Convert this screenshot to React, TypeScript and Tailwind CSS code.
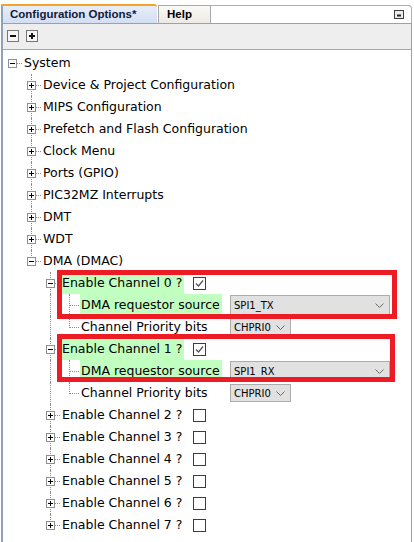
import React from 'react';

type Row = {
  level: number;
  label: string;
  toggle?: 'plus' | 'minus';
  last?: boolean;
  through?: boolean; // DMA children guide (x=47) passes through
  green?: boolean;
  check?: boolean;
  combo?: { value: string; wide: boolean };
};

const rows: Row[] = [
  { level: 0, label: 'System', toggle: 'minus' },
  { level: 1, label: 'Device & Project Configuration', toggle: 'plus' },
  { level: 1, label: 'MIPS Configuration', toggle: 'plus' },
  { level: 1, label: 'Prefetch and Flash Configuration', toggle: 'plus' },
  { level: 1, label: 'Clock Menu', toggle: 'plus' },
  { level: 1, label: 'Ports (GPIO)', toggle: 'plus' },
  { level: 1, label: 'PIC32MZ Interrupts', toggle: 'plus' },
  { level: 1, label: 'DMT', toggle: 'plus' },
  { level: 1, label: 'WDT', toggle: 'plus' },
  { level: 1, label: 'DMA (DMAC)', toggle: 'minus', last: true },
  { level: 2, label: 'Enable Channel 0 ?', toggle: 'minus', green: true, check: true },
  { level: 3, label: 'DMA requestor source', through: true, green: true, combo: { value: 'SPI1_TX', wide: true } },
  { level: 3, label: 'Channel Priority bits', through: true, last: true, combo: { value: 'CHPRI0', wide: false } },
  { level: 2, label: 'Enable Channel 1 ?', toggle: 'minus', green: true, check: true },
  { level: 3, label: 'DMA requestor source', through: true, green: true, combo: { value: 'SPI1_RX', wide: true } },
  { level: 3, label: 'Channel Priority bits', through: true, last: true, combo: { value: 'CHPRI0', wide: false } },
  { level: 2, label: 'Enable Channel 2 ?', toggle: 'plus', check: false },
  { level: 2, label: 'Enable Channel 3 ?', toggle: 'plus', check: false },
  { level: 2, label: 'Enable Channel 4 ?', toggle: 'plus', check: false },
  { level: 2, label: 'Enable Channel 5 ?', toggle: 'plus', check: false },
  { level: 2, label: 'Enable Channel 6 ?', toggle: 'plus', check: false },
  { level: 2, label: 'Enable Channel 7 ?', toggle: 'plus', check: false, last: true },
];

// x positions per tree level (relative to the tree's inner left edge)
const guideLeft = ['', 'left-[28px]', 'left-[47px]', 'left-[66px]'];
const boxLeft = ['left-[5px]', 'left-[24px]', 'left-[43px]'];
const stubLeft = ['left-[14px] w-[5px]', 'left-[33px] w-[5px]', 'left-[52px] w-[5px]', 'left-[67px] w-[9px]'];
const labelPad = ['pl-[20px]', 'pl-[39px]', 'pl-[58px]', 'pl-[77px]'];

const dot = 'absolute border-dotted border-[#8c8c8c]';

const Toggle = ({ open, level }: { open: boolean; level: number }) => (
  <svg width="9" height="9" viewBox="0 0 9 9" className={`absolute top-[7px] ${boxLeft[level]}`}>
    <rect x="0.5" y="0.5" width="8" height="8" fill="#fff" stroke="#8f8f8f" />
    <path d="M2 4.5h5" stroke="#000" />
    {!open && <path d="M4.5 2v5" stroke="#000" />}
  </svg>
);

const CheckBox = ({ checked }: { checked: boolean }) => (
  <svg width="13" height="13" viewBox="0 0 13 13" className="ml-[9px] shrink-0">
    <rect x="0.5" y="0.5" width="12" height="12" fill="#fff" stroke="#3c3c3c" />
    {checked && <path d="M3 6.5 5.5 9 10 3.5" fill="none" stroke="#505050" strokeWidth="1.2" />}
  </svg>
);

const Combo = ({ value, wide }: { value: string; wide: boolean }) => (
  <div
    className={`flex items-center shrink-0 border border-[#acacac] bg-[#e1e1e1] pl-[3px] text-[10px] text-black ${
      wide ? 'w-[160px] h-[21px]' : 'w-[61px] h-[18px]'
    }`}
  >
    <span>{value}</span>
    <svg width="9" height="5" viewBox="0 0 9 5" className="ml-auto mr-[5px]">
      <path d="M0.5 0.5 4.5 4.5 8.5 0.5" fill="none" stroke="#6a6a6a" />
    </svg>
  </div>
);

const TreeRow = ({ row }: { row: Row }) => {
  const { level } = row;
  return (
    <div className="relative h-[22px] flex items-center">
      {row.through && <span className={`${dot} left-[47px] top-0 h-[22px] border-l`} />}
      {level > 0 && (
        <span className={`${dot} ${guideLeft[level]} top-0 border-l ${row.last ? 'h-[12px]' : 'h-[22px]'}`} />
      )}
      <span className={`${dot} ${stubLeft[level]} top-[11px] border-t`} />
      {row.toggle && <Toggle open={row.toggle === 'minus'} level={level} />}
      <div className={`flex items-center h-full ${labelPad[level]}`}>
        <div className={level === 3 ? 'w-[150px] h-full' : 'h-full'}>
          <span className={`inline-block h-full leading-[22px] pl-[1px] pr-[2px] ${row.green ? 'bg-[#c0ffc0]' : ''}`}>
            {row.label}
          </span>
        </div>
        {row.check !== undefined && <CheckBox checked={row.check} />}
        {row.combo && <Combo value={row.combo.value} wide={row.combo.wide} />}
      </div>
    </div>
  );
};

const ToolButton = ({ plus }: { plus?: boolean }) => (
  <svg width="12" height="12" viewBox="0 0 12 12">
    <rect x="0.5" y="0.5" width="11" height="11" fill="#f5f5f5" stroke="#777" />
    <path d="M3 6h6" stroke="#111" strokeWidth="2" />
    {plus && <path d="M6 3v6" stroke="#111" strokeWidth="2" />}
  </svg>
);

export default function App() {
  return (
    <div className="relative w-[414px] h-[542px] bg-white overflow-hidden font-['DejaVu_Sans',sans-serif] text-[12.5px] text-black">
      <div className="ml-[1px] w-[411px] h-full pt-[4px] flex flex-col">
        {/* tab strip */}
        <div className="flex items-end h-[20px] border-b border-[#8fa3b9] font-['Liberation_Sans',Arial,sans-serif] font-bold text-[11.5px]">
          <div className="w-[156px] h-[19px] border-l-2 border-l-[#8ea2b8] border-t-2 border-t-[#f4a22a] rounded-tr-[3px] bg-gradient-to-b from-[#e8eefa] to-[#d3def2] pl-[7px] leading-[16px] text-[#101a3c]">
            Configuration Options*
          </div>
          <div className="ml-[1px] w-[53px] h-[18px] border border-b-0 border-[#a9a9a9] bg-gradient-to-b from-[#faf9f5] to-[#ebeae4] pl-[8px] leading-[17px] text-black">
            Help
          </div>
          <div className="flex-1 h-[18px] border-t border-r border-[#a3b1c0] rounded-tr-[4px] flex justify-end items-start pt-[4px] pr-[7px]">
            <svg width="10" height="9" viewBox="0 0 10 9">
              <rect x="0.5" y="0.5" width="9" height="8" fill="#ececec" stroke="#3d3d3d" />
              <path d="M3 5.5h4" stroke="#222" strokeWidth="2" />
            </svg>
          </div>
        </div>

        <div className="flex-1 flex flex-col border-l-2 border-r border-[#8ea2b8]">
          {/* toolbar */}
          <div className="h-[26px] bg-[#eeeeee] border-b border-[#9ea9b5] flex items-start gap-[7px] pt-[6px] pl-[4px]">
            <ToolButton />
            <ToolButton plus />
          </div>

          {/* tree */}
          <div className="flex-1 bg-white pt-[2px]">
            {rows.map((r, i) => (
              <TreeRow key={i} row={r} />
            ))}
          </div>
        </div>
      </div>

      {/* red annotation frames */}
      <div className="absolute left-[57px] top-[270px] w-[340px] h-[49px] border-[5px] border-[#ed1c24]" />
      <div className="absolute left-[57px] top-[334px] w-[338px] h-[48px] border-[5px] border-[#ed1c24]" />
    </div>
  );
}
